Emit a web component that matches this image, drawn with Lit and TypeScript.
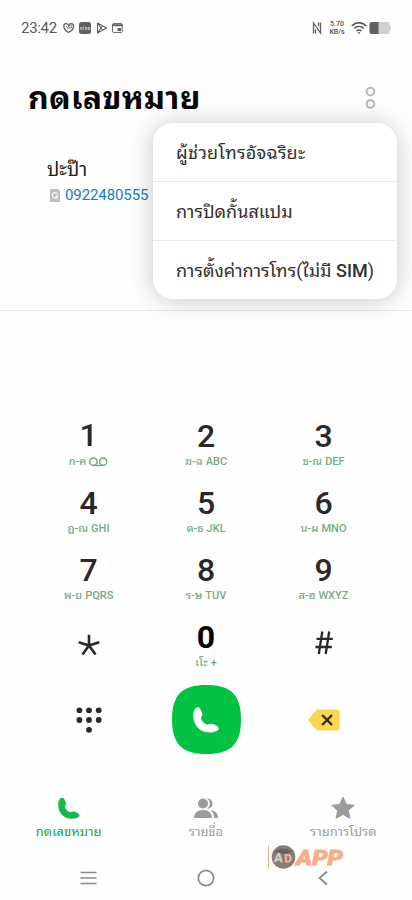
import { LitElement, html, css, svg, nothing } from "lit";
import { customElement } from "lit/decorators.js";

const KEYS = [
  { d: "1", th: "ก-ฅ", en: "", vm: true },
  { d: "2", th: "ฆ-ฉ", en: "ABC" },
  { d: "3", th: "ช-ณ", en: "DEF" },
  { d: "4", th: "ฎ-ณ", en: "GHI" },
  { d: "5", th: "ด-ธ", en: "JKL" },
  { d: "6", th: "น-ผ", en: "MNO" },
  { d: "7", th: "พ-ย", en: "PQRS" },
  { d: "8", th: "ร-ษ", en: "TUV" },
  { d: "9", th: "ส-ฮ", en: "WXYZ" },
  { d: "*" },
  { d: "0", th: "เโะ", en: "+" },
  { d: "#" },
] as { d: string; th?: string; en?: string; vm?: boolean }[];

const handset = svg`<path d="M3.600 .4C1.800 .7 .2 3.400 .2 7.500C.2 15.500 6 21.500 13.500 21.500C17.500 21.500 20.800 20.400 21.500 18.800C21.900 17.400 20.800 16.400 19 15.500L17 14.500C15.400 13.800 14.200 14.300 13.100 14.700C11.800 15.100 10.600 14.600 9.200 13.300C7.300 11.500 6.500 10 6.900 8.700C7.700 7.400 8.300 6.600 7.700 5.200L6.200 1.800C5.700 .7 4.700 .2 3.600 .4Z"/>`;

@customElement("app-root")
export class AppRoot extends LitElement {
  static styles = css`
    :host {
      display: block;
      position: relative;
      width: 412px;
      height: 900px;
      overflow: hidden;
      background: #fefefe;
      font-family: Roboto, "Noto Sans Thai Looped", "Noto Looped Thai", "Droid Sans Thai", Loma, Waree, Garuda, "Noto Sans", sans-serif;
      color: #222;
    }
    * { box-sizing: border-box; }
    svg { display: block; flex: none; }
    .screen { display: flex; flex-direction: column; height: 900px; }
    .screen > * { flex: none; }
    .status { display: flex; align-items: center; height: 57px; padding: 0 21px 1px; color: #5b5b5b; }
    .clock { font-size: 15px; line-height: 18px; width: 42px; white-space: nowrap; letter-spacing: -0.3px; }
    .spacer { flex: 1; }
    .speed { font-size: 7px; line-height: 8.500px; font-weight: 600; text-align: center; margin: 0 5px 0 6px; width: 18px; white-space: nowrap; }
    .head { display: flex; align-items: center; justify-content: space-between; height: 82px; padding: 0 36px 0 28px; }
    h1 { margin: 0; font-size: 32px; letter-spacing: 0.300px; line-height: 40px; font-weight: 700; color: #080808; white-space: nowrap; }
    .contact { height: 172px; padding: 16px 0 0 47px; border-bottom: 1px solid #e8e8e8; }
    .name { font-size: 19px; line-height: 30px; white-space: nowrap; }
    .number { display: flex; align-items: center; gap: 5px; padding-left: 3px; height: 20px; font-size: 15px; letter-spacing: -0.1px; color: #1879c4; }
    .pad { display: grid; grid-template-columns: repeat(3, 117.500px); grid-template-rows: repeat(4, 67px); justify-content: center; margin-top: 106px; height: 268px; }
    .key { display: flex; flex-direction: column; align-items: center; padding-top: 3px; }
    .digit { font-size: 32px; line-height: 34px; font-weight: 500; color: #292929; margin: -1px 0 1px; }
    .digit.zero { font-weight: 700; color: #000; }
    .digit.one { margin: -2px 0 2px; }
    .sub { display: flex; align-items: center; gap: 3px; height: 16px; font-size: 11px; line-height: 16px; color: #79a885; font-weight: 500; white-space: nowrap; }
    .actions { display: grid; grid-template-columns: repeat(3, 117.500px); justify-content: center; place-items: center; height: 67px; }
    .tabs { display: grid; grid-template-columns: repeat(3, 1fr); height: 62px; margin-top: 43px; }
    .tab { display: flex; flex-direction: column; align-items: center; color: #9b9b9b; font-size: 13px; line-height: 18px; white-space: nowrap; }
    .tab svg { margin: 1px 0 3px; }
    .active { color: #18a04a; }
    .system { display: grid; grid-template-columns: repeat(3, 117.500px); justify-content: center; place-items: center; height: 42px; color: #8a8a8a; }
    .menu { position: absolute; left: 153px; top: 123px; width: 244px; height: 176px; border-radius: 20px; background: #fff; box-shadow: 0 1px 24px rgba(0, 0, 0, 0.22); display: flex; flex-direction: column; }
    .item { height: 59px; flex: none; display: flex; align-items: center; padding: 1px 23px 0; font-size: 18px; line-height: 28px; white-space: nowrap; color: #303030; }
    .item:first-child { height: 58px; letter-spacing: 0.250px; padding-top: 2px; }
    .item + .item { border-top: 1px solid #e8e8e8; }
    .latin { font-weight: 500; }
    .brand { position: absolute; left: 267px; top: 844px; display: block; }
  `;

  private keyFace(k: (typeof KEYS)[number]) {
    if (k.d === "*")
      return html`<svg width="24" height="67" viewBox="0 0 24 67" fill="none" stroke="#292929" stroke-width="2.600"><path d="M12 24.500V13.800M12 24.500L1.700 21.300M12 24.500L22.300 21.300M12 24.500L5.500 33.500M12 24.500L18.500 33.500"/></svg>`;
    if (k.d === "#")
      return html`<svg width="20" height="67" viewBox="0 0 20 67" fill="none" stroke="#292929" stroke-width="2.300"><path d="M8.300 10.500L4.800 33M15.200 10.500L11.700 33M2.500 17.800H18.800M1.500 26H17.800"/></svg>`;
    return html`
      <div class="digit ${k.d === "0" ? "zero" : k.d === "1" ? "one" : ""}">${k.d}</div>
      <div class="sub">
        <span>${k.th}</span>
        ${k.vm
          ? html`<svg width="19" height="10" viewBox="0 0 19 10" fill="none" stroke="#79a885" stroke-width="1.500"><circle cx="4.500" cy="4.700" r="3.600"/><circle cx="14.200" cy="4.700" r="3.600"/><path d="M4.500 8.500H14.200"/></svg>`
          : nothing}
        ${k.en ? html`<span>${k.en}</span>` : nothing}
      </div>`;
  }

  render() {
    return html`
      <div class="screen">
        <div class="status">
          <span class="clock">23:42</span>
          <svg width="62" height="14" viewBox="0 0 62 14" fill="none" stroke="#606060">
            <path d="M5.500 11.500C2.500 9.500.8 7.500.8 5.500.8 3.500 2 2.700 3.200 2.700 4.300 2.700 5.200 3.500 5.600 4.200 6 3.200 7 2.700 8 2.700 9.600 2.700 10.600 3.900 10.600 5.500 10.600 7.700 8.500 9.800 5.500 11.500Z" stroke-width="1.300"/>
            <circle cx="7.300" cy="5.600" r="1.500"/><path d="M3 5L5.600 8.200"/>
            <rect x="16" y="1" width="12" height="12" rx="2.500" fill="#606060" stroke="none"/>
            <text x="17" y="8.600" font-size="4.500" font-weight="700" fill="#ddd" stroke="none" textLength="10">vivo</text>
            <path d="M34.500 2V12L43.500 7ZM34.500 2L39.500 9.200M34.500 12L39.500 4.800" stroke-linejoin="round" stroke-width="1.100"/>
            <rect x="49.600" y="2.600" width="9.600" height="8.800" rx=".8"/><path d="M49.500 4.200H59.500" stroke-width="2"/><rect x="54.500" y="7" width="3.500" height="3" fill="#606060" stroke="none"/>
          </svg>
          <span class="spacer"></span>
          <svg width="10" height="14" viewBox="0 0 10 14" fill="none" stroke="#606060" stroke-width="1.300"><path d="M1.500 12.500V2L8.500 12V1.500M3.500 8.500V12.500M6.500 5V1.500"/></svg>
          <span class="speed">5.70<br />KB/s</span>
          <svg width="40" height="16" viewBox="0 0 40 16" fill="none" stroke="#505050" stroke-width="1.500">
            <path d="M.8 6C5 1.800 11 1.800 15.200 6M3.200 8.500C6 5.800 10 5.800 12.800 8.500M5.500 11C7 9.700 9 9.700 10.500 11"/>
            <path d="M6.500 12.300H9.500L8 14Z" fill="#505050" stroke="none"/>
            <path d="M21 2H37Q38.200 2 38.500 5Q40 5.500 40 8Q40 10.500 38.500 11Q38.200 14 37 14H21Q18.500 14 18.500 11.500V4.500Q18.500 2 21 2Z" fill="#cfcfcf" stroke="none"/>
            <path d="M21 2H27.500V14H21Q18.500 14 18.500 11.500V4.500Q18.500 2 21 2Z" fill="#606060" stroke="none"/>
          </svg>
        </div>
        <div class="head">
          <h1>กดเลขหมาย</h1>
          <svg width="11" height="24" viewBox="0 0 11 24" fill="none" stroke="#b8b8b8" stroke-width="2"><circle cx="5.500" cy="5.600" r="3.800"/><circle cx="5.500" cy="18" r="3.800"/></svg>
        </div>
        <div class="contact">
          <div class="name">ปะป๊า</div>
          <div class="number">
            <svg width="10" height="13" viewBox="0 0 10 13"><path d="M0 0H8L10 2V13H0Z" fill="#bfbfbf"/><path d="M7.300 4.700A2.800 2.800 0 1 0 7.800 7H5.300" fill="none" stroke="#fff" stroke-width="1.200"/></svg>
            <span>0922480555</span>
          </div>
        </div>
        <div class="pad">${KEYS.map((k) => html`<div class="key">${this.keyFace(k)}</div>`)}</div>
        <div class="actions">
          <svg width="26" height="26" viewBox="0 0 26 26" fill="#292929">
            ${[[3.4, 3.3], [13, 3.3], [22.7, 3.3], [3.4, 13], [13, 13], [22.7, 13], [13, 22.8]].map(([x, y]) => svg`<circle cx=${x} cy=${y} r="2.900"/>`)}
          </svg>
          <svg width="69" height="69" viewBox="0 0 69 69">
            <path d="M34.500 0C59 0 69 10 69 34.500S59 69 34.500 69 0 59 0 34.500 10 0 34.500 0Z" fill="#03c242"/>
            <g transform="translate(21 21.800) scale(1.190)" fill="#fff">${handset}</g>
          </svg>
          <svg width="32" height="22" viewBox="0 0 32 22"><path d="M10.500 .5H29Q31.500 .5 31.500 3V19Q31.500 21.500 29 21.500H10.500Q9 21.500 7.800 20.300L1 12.300Q0 11 1 9.700L7.800 1.700Q9 .5 10.500 .5Z" fill="#fad74e"/><path d="M14.200 6L24 16M24 6L14.200 16" stroke="#33290f" stroke-width="2.200"/></svg>
        </div>
        <div class="tabs">
          <div class="tab active">
            <svg width="22" height="24" viewBox="0 0 22 24" fill="#16b94c"><g transform="translate(0 1.300)">${handset}</g></svg>
            <span>กดเลขหมาย</span>
          </div>
          <div class="tab">
            <svg width="26" height="24" viewBox="0 0 26 24" fill="#9b9b9b"><circle cx="10" cy="7.500" r="5"/><path d="M1 22C1 16.800 4.700 14 10 14S19 16.800 19 22Z"/><path d="M14 2.500C17.200 2.100 19.500 4.500 19.500 7.500S17.200 12.800 14.500 12.600C16 11.300 16.800 9.700 16.800 7.500S15.800 3.700 14 2.500ZM17.500 14C22 14.500 25 17.300 25 22H21C21 18.500 19.800 16 17.500 14Z"/></svg>
            <span>รายชื่อ</span>
          </div>
          <div class="tab">
            <svg width="24" height="24" viewBox="0 0 24 24" fill="#9b9b9b" stroke="#9b9b9b" stroke-width="1.200" stroke-linejoin="round"><path d="M12 1.500L15.200 8.500L22.800 9.300L17.200 14.400L18.800 22L12 18.200L5.200 22L6.800 14.400L1.200 9.300L8.800 8.500Z"/></svg>
            <span>รายการโปรด</span>
          </div>
        </div>
        <div class="system">
          <svg width="17" height="14" viewBox="0 0 17 14" stroke="currentColor" stroke-width="1.700"><path d="M.5 1.500H16.500M.5 7H16.500M.5 12.500H16.500"/></svg>
          <svg width="18" height="18" viewBox="0 0 18 18" fill="none" stroke="currentColor" stroke-width="1.700"><circle cx="9" cy="9" r="7.700"/></svg>
          <svg width="12" height="16" viewBox="0 0 12 16" fill="none" stroke="currentColor" stroke-width="1.700"><path d="M9 1.500L1.500 8L9 14.500"/></svg>
        </div>
      </div>

      <div class="menu">
        <div class="item">ผู้ช่วยโทรอัจฉริยะ</div>
        <div class="item">การปิดกั้นสแปม</div>
        <div class="item"><span>การตั้งค่าการโทร(ไม่มี <span class="latin">SIM</span>)</span></div>
      </div>

      <svg class="brand" width="80" height="26" viewBox="0 0 80 26">
        <path d="M1.500 1.500V25" stroke="#e9ae8c" stroke-width="1.200"/>
        <circle cx="16.500" cy="13" r="11.800" fill="#8a7b76"/>
        <path d="M6 8L15 4.500L27.500 7L17 10Z" fill="#6d605d"/>
        <text x="7" y="18" font-size="13" font-weight="900" fill="#d4cbc7" textLength="9" lengthAdjust="spacingAndGlyphs" transform="rotate(4 11 13)">A</text>
        <text x="17" y="18.500" font-size="12" font-weight="900" fill="#f2b696" transform="rotate(-5 20 13)">D</text>
        <text x="29" y="20.500" font-size="21" font-weight="900" font-style="italic" fill="#f5b08a" stroke="#f5b08a" stroke-width=".8" textLength="47" lengthAdjust="spacingAndGlyphs">APP</text>
      </svg>
    `;
  }
}
